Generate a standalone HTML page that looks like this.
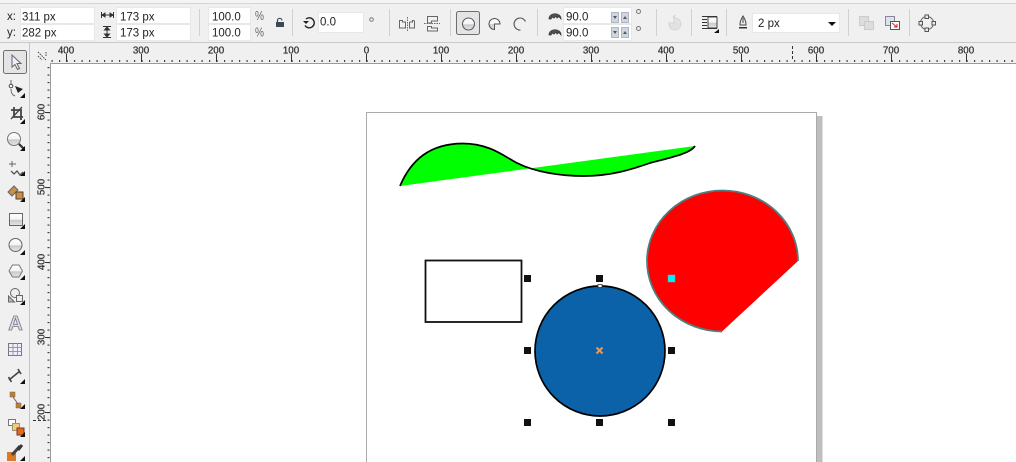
<!DOCTYPE html>
<html><head><meta charset="utf-8"><style>
html,body{margin:0;padding:0;background:#fff;width:1016px;height:462px;overflow:hidden}
svg{display:block}
text{font-family:"Liberation Sans",sans-serif}
.t{font-size:11.5px;fill:#222}
.r{font-size:9.8px;fill:#333;stroke:#333;stroke-width:.25;text-anchor:middle}
.i{fill:#fff;stroke:#e8e8e8}
.s{stroke:#d0d0d0;stroke-width:1}
.c{fill:none;stroke:#666;stroke-width:1}
.k{fill:#111}
</style></head><body>
<svg width="1016" height="462" viewBox="0 0 1016 462" xmlns="http://www.w3.org/2000/svg">
<defs>
<pattern id="hm" x="366.5" y="0" width="7.5" height="462" patternUnits="userSpaceOnUse"><rect x="0" y="60" width="1.2" height="2" fill="#444"/></pattern>
<pattern id="vm" x="0" y="112" width="60" height="7.5" patternUnits="userSpaceOnUse"><rect x="47.500" y="0" width="2" height="1.200" fill="#444"/></pattern>
<linearGradient id="g1" x1="0" y1="0" x2="0" y2="1"><stop offset="0" stop-color="#fff"/><stop offset=".5" stop-color="#f4f4f4"/><stop offset=".55" stop-color="#c8c8d0"/><stop offset="1" stop-color="#e6e6ea"/></linearGradient>
</defs>
<!-- backgrounds -->
<rect width="1016" height="462" fill="#fff"/>
<rect width="1016" height="63" fill="#f0f0f0"/>
<rect y="0" width="1016" height="3" fill="#f4f4f4"/>
<rect y="3" width="1016" height="1" fill="#d4d4d4"/>
<rect y="42" width="1016" height="1" fill="#c8c8c8"/>
<rect x="0" y="43" width="30" height="419" fill="#f0f0f0"/>
<rect x="29" y="43" width="1" height="419" fill="#c4c4c4"/>
<rect x="30" y="43" width="20" height="419" fill="#f0f0f0"/>
<rect x="50" y="63" width="966" height="1" fill="#9a9a9a"/>
<rect x="50" y="63" width="1" height="399" fill="#9a9a9a"/>
<!-- ruler ticks -->
<rect x="51" y="55" width="965" height="8" fill="url(#hm)"/>
<rect x="44" y="64" width="6" height="398" fill="url(#vm)"/>
<g fill="#333">
<rect x="66" y="54" width="1" height="8"/><rect x="141" y="54" width="1" height="8"/><rect x="216" y="54" width="1" height="8"/><rect x="291" y="54" width="1" height="8"/><rect x="366" y="54" width="1" height="8"/><rect x="441" y="54" width="1" height="8"/><rect x="516" y="54" width="1" height="8"/><rect x="591" y="54" width="1" height="8"/><rect x="666" y="54" width="1" height="8"/><rect x="741" y="54" width="1" height="8"/><rect x="816" y="54" width="1" height="8"/><rect x="891" y="54" width="1" height="8"/><rect x="966" y="54" width="1" height="8"/>
<rect x="792" y="46" width="1" height="3"/><rect x="792" y="51" width="1" height="3"/><rect x="792" y="56" width="1" height="3"/>
<rect x="45" y="112" width="5" height="1"/><rect x="45" y="187" width="5" height="1"/><rect x="45" y="262" width="5" height="1"/><rect x="45" y="337" width="5" height="1"/><rect x="45" y="412" width="5" height="1"/>
<rect x="33" y="420" width="3" height="1"/><rect x="38" y="420" width="3" height="1"/><rect x="43" y="420" width="3" height="1"/>
</g>
<g class="r">
<text class="r" x="66" y="53.5">400</text><text class="r" x="141" y="53.5">300</text><text class="r" x="216" y="53.5">200</text><text class="r" x="291" y="53.5">100</text><text class="r" x="366.5" y="53.5">0</text><text class="r" x="441" y="53.5">100</text><text class="r" x="516" y="53.5">200</text><text class="r" x="591" y="53.5">300</text><text class="r" x="666" y="53.5">400</text><text class="r" x="741" y="53.5">500</text><text class="r" x="816" y="53.5">600</text><text class="r" x="891" y="53.5">700</text><text class="r" x="966" y="53.5">800</text>
<text class="r" transform="translate(44.5,112) rotate(-90)">600</text><text class="r" transform="translate(44.5,187) rotate(-90)">500</text><text class="r" transform="translate(44.5,262) rotate(-90)">400</text><text class="r" transform="translate(44.5,337) rotate(-90)">300</text><text class="r" transform="translate(44.5,412) rotate(-90)">200</text>
</g>
<!-- ruler corner -->
<path d="M38,52 L46,60 M46,52 L46,56 M38,56 L42,60" fill="none" stroke="#444" stroke-width="1" stroke-dasharray="1.5 1"/>
<!-- top toolbar: position -->
<text class="t" x="7" y="20">x:</text><text class="t" x="7" y="36">y:</text>
<rect class="i" x="20.500" y="7.500" width="74" height="16"/><rect class="i" x="20.500" y="24.500" width="74" height="16"/>
<text class="t" x="22" y="20.500">311 px</text><text class="t" x="22" y="36.500">282 px</text>
<path d="M101.500,12v6M113.500,12v6M102,15h11M102,15l3,-2v4zM113,15l-3,-2v4z" fill="#333" stroke="#333" stroke-width="1"/>
<path d="M103,26.500h8M103,37.500h8M107,27v10M107,27l-2.500,3h5zM107,37l-2.500,-3h5z" fill="#333" stroke="#333" stroke-width="1"/>
<rect class="i" x="116.500" y="7.500" width="74" height="16"/><rect class="i" x="116.500" y="24.500" width="74" height="16"/>
<text class="t" x="120" y="20.500">173 px</text><text class="t" x="120" y="36.500">173 px</text>
<line class="s" x1="199.500" y1="9" x2="199.500" y2="36"/>
<rect class="i" x="208.500" y="7.500" width="42" height="16"/><rect class="i" x="208.500" y="24.500" width="42" height="16"/>
<text class="t" x="212" y="20.500">100.0</text><text class="t" x="212" y="36.500">100.0</text>
<text x="255" y="20" font-size="13" fill="#666" textLength="9" lengthAdjust="spacingAndGlyphs">%</text><text x="255" y="36.500" font-size="13" fill="#666" textLength="9" lengthAdjust="spacingAndGlyphs">%</text>
<rect x="276" y="22" width="8" height="5" fill="#3a4a55"/><path d="M277.500,22v-1.500a2.200,2.200 0 0 1 4.400,0" fill="none" stroke="#3a4a55" stroke-width="1.200"/>
<line class="s" x1="292.500" y1="9" x2="292.500" y2="36"/>
<!-- rotation -->
<path d="M306,19a5,5 0 1 1 -1,6.500" fill="none" stroke="#222" stroke-width="1.400"/><path d="M303,21h6l-3,3z" fill="#222"/>
<rect class="i" x="318.500" y="12.500" width="45" height="20"/>
<text class="t" x="320" y="25.500">0.0</text>
<circle cx="371.500" cy="19.500" r="1.800" fill="none" stroke="#777"/>
<line class="s" x1="389.500" y1="9" x2="389.500" y2="36"/>
<!-- mirror -->
<path d="M399.500,20.500v7.500h6v-6h-3v-1.500zM409.500,22h3v-1.500h1.500M414.500,20.500v7.500h-5v-6" class="c"/>
<path d="M407.500,17v14" stroke="#666" stroke-dasharray="1.500 1" fill="none"/>
<path d="M427.500,16.500h10v4.500h-6v2h-4zM427.500,26.500h4v1.500h6v3h-10z" class="c"/>
<path d="M424,23.500h16" stroke="#666" stroke-dasharray="1.500 1" fill="none"/>
<line class="s" x1="450.500" y1="9" x2="450.500" y2="36"/>
<!-- ellipse type -->
<rect x="456.500" y="11.500" width="23" height="23" rx="2" fill="#e4e4e4" stroke="#6e6e6e"/>
<circle cx="468.500" cy="24" r="6" fill="url(#g1)" stroke="#555"/>
<path d="M494.500,24h5.500a5.500,5.500 0 1 0 -5.500,5.500z" fill="url(#g1)" stroke="#555"/>
<path d="M520.500,30a6,6 0 1 1 5,-8.500" fill="none" stroke="#555" stroke-width="1.100"/>
<line class="s" x1="537.500" y1="9" x2="537.500" y2="36"/>
<!-- angles -->
<path d="M549,19c0,-7 12,-7 12,0l-2,-2.500l-2,1.500l-1,-2l-2,2l-2,-1l-1,2z" fill="#555" stroke="#333" stroke-width=".8"/>
<path d="M549,35c0,-7 12,-7 12,0l-2,-2.500l-2,1.500l-1,-2l-2,2l-2,-1l-1,2z" fill="#555" stroke="#333" stroke-width=".8"/>
<rect class="i" x="563.500" y="7.500" width="68" height="16"/><rect class="i" x="563.500" y="24.500" width="68" height="16"/>
<text class="t" x="566" y="20.500">90.0</text><text class="t" x="566" y="36.500">90.0</text>
<g fill="#d0d6e0" stroke="#b0b6c0"><rect x="611.500" y="12.500" width="7" height="10"/><rect x="621.500" y="12.500" width="7" height="10"/><rect x="611.500" y="27.500" width="7" height="10"/><rect x="621.500" y="27.500" width="7" height="10"/></g>
<path d="M613,16h4l-2,3zM623,19h4l-2,-3zM613,31h4l-2,3zM623,34h4l-2,-3z" fill="#556"/>
<circle cx="638.500" cy="11.500" r="2" fill="none" stroke="#777"/><circle cx="638.500" cy="28.500" r="2" fill="none" stroke="#777"/>
<line class="s" x1="656.500" y1="9" x2="656.500" y2="36"/>
<!-- disabled rotate pie -->
<path d="M674,23v-5a6,6 0 1 1 -5,5z" fill="#e2e2e2" stroke="#d4d4d4"/><path d="M673,18l2,-3" stroke="#d4d4d4" fill="none" stroke-width="1.500"/>
<line class="s" x1="691.500" y1="9" x2="691.500" y2="36"/>
<!-- text wrap -->
<rect x="708" y="17" width="9" height="11" fill="url(#g1)" stroke="#444"/>
<path d="M702,16.500h15M702,19.500h5M702,22.500h5M702,25.500h5M702,28.500h15" stroke="#333" stroke-width="1" fill="none"/>
<path d="M719,33h-5l5,-4z" fill="#111"/>
<line class="s" x1="726.500" y1="9" x2="726.500" y2="36"/>
<!-- pen -->
<path d="M743,16c-3,5 -3,7 -3,9h6c0,-2 0,-4 -3,-9zM743,18v5" fill="#eee" stroke="#444"/><rect x="739" y="27" width="8" height="1.500" fill="#333"/>
<rect x="752.500" y="13.500" width="87" height="19" class="i"/>
<text class="t" x="758" y="27">2 px</text>
<path d="M828,22h8l-4,4z" fill="#111"/>
<line class="s" x1="848.500" y1="9" x2="848.500" y2="36"/>
<!-- to front/back -->
<rect x="859.500" y="16.500" width="9" height="9" fill="#ddd" stroke="#ccc"/><rect x="864.500" y="21.500" width="9" height="8" fill="#ddd" stroke="#ccc"/>
<rect x="885.500" y="16.500" width="9" height="9" fill="#dde0ee" stroke="#889"/><rect x="890.500" y="21.500" width="9" height="8" fill="#fff" stroke="#555"/><path d="M892,23l5,4m0,-3v3h-3" stroke="#d22" fill="none"/>
<line class="s" x1="909.500" y1="9" x2="909.500" y2="36"/>
<circle cx="927" cy="23" r="6.500" fill="none" stroke="#666"/>
<g fill="#eee" stroke="#555"><rect x="925" y="15" width="3.500" height="3.500"/><rect x="925" y="28" width="3.500" height="3.500"/><rect x="919" y="21.500" width="3.500" height="3.500"/><rect x="932" y="21.500" width="3.500" height="3.500"/></g>
<!-- left toolbox -->
<rect x="3.500" y="50.500" width="23" height="23" rx="2" fill="#e4e4e4" stroke="#707070"/>
<path d="M12,55v12l3,-2.500l2.500,5l2,-1l-2.500,-5h4z" fill="#eef" stroke="#666"/>
<circle cx="11" cy="86" r="1.800" fill="#fff" stroke="#444"/><path d="M11,80v4M11,89c0,4 1,6 4,7" stroke="#666" fill="none"/><path d="M15,86l8,3l-5,4z" fill="#222"/><path d="M25,93v5h-5z" fill="#111"/>
<path d="M11,110h10v10M14,107v10h9" fill="none" stroke="#444" stroke-width="1.800"/><path d="M11,119l11,-12" stroke="#444" stroke-width="1.300"/><path d="M25,119v5h-5z" fill="#111"/>
<circle cx="14" cy="139" r="6.500" fill="url(#g1)" stroke="#777"/><path d="M19,144l5,5" stroke="#333" stroke-width="2.200"/><path d="M25,146v5h-5z" fill="#111"/>
<path d="M9,164h7M12,161v6" stroke="#666"/><path d="M11,171l3,3l3,-3l3,4l3,-3" fill="none" stroke="#555" stroke-width="1.300"/><path d="M25,171v5h-5z" fill="#111"/>
<path d="M8,192l6,-6l4,4l-6,6z" fill="#c8904a" stroke="#666"/><rect x="16" y="192" width="7" height="7" fill="#d88c38" stroke="#444"/><path d="M25,197v5h-5z" fill="#111"/>
<rect x="9.500" y="213.500" width="13" height="12" fill="url(#g1)" stroke="#666"/><path d="M25,224v5h-5z" fill="#111"/>
<circle cx="15.500" cy="245" r="6.500" fill="url(#g1)" stroke="#666"/><path d="M25,250v5h-5z" fill="#111"/>
<path d="M9,271l3.500,-6h6.500l3.500,6l-3.500,6h-6.500z" fill="url(#g1)" stroke="#777"/><path d="M25,275v5h-5z" fill="#111"/>
<circle cx="15" cy="293" r="4.500" fill="#eee" stroke="#666"/><rect x="16.500" y="295.500" width="6" height="6" fill="#eee" stroke="#666"/><path d="M8.500,296l6,6h-6z" fill="#bbb" stroke="#666"/><path d="M25,300v5h-5z" fill="#111"/>
<text x="15.500" y="330" text-anchor="middle" font-size="20" font-weight="bold" fill="#d8dce8" stroke="#778" stroke-width=".8">A</text>
<rect x="8.500" y="343.500" width="13" height="12" fill="#eef" stroke="#777"/><path d="M8.500,347.500h13M8.500,351.500h13M13,343.500v12M17.500,343.500v12" stroke="#999" fill="none"/>
<path d="M9,380l11,-9M8.500,377l3,5M18,369l3,5" stroke="#444" stroke-width="1.600" fill="none"/><path d="M25,379v5h-5z" fill="#111"/>
<rect x="10" y="392" width="5" height="5" fill="#c87a28" stroke="#666" stroke-width=".5"/><rect x="16" y="403" width="5" height="5" fill="#c87a28" stroke="#666" stroke-width=".5"/><path d="M13,397l5,7" stroke="#666"/><path d="M25,404v5h-5z" fill="#111"/>
<rect x="8.500" y="419.500" width="7" height="6" fill="#fff" stroke="#777"/><rect x="12.500" y="423.500" width="7" height="7" fill="#f2ca78" stroke="#997"/><rect x="17" y="428" width="7" height="7" fill="#e86a10" stroke="#733"/><path d="M25,432v5h-5z" fill="#111"/>
<rect x="7" y="452" width="9" height="9" fill="#d87a28"/><path d="M12,455l8,-9" stroke="#444" stroke-width="3"/><path d="M18,450l4,-5" stroke="#333" stroke-width="3"/><path d="M25,456v5h-5z" fill="#111"/>
<!-- page -->
<rect x="817" y="116" width="5.500" height="346" fill="#bfbfbf"/>
<path d="M366.500,462V112.500H816.500V462" fill="#fff" stroke="#aaa"/>
<!-- green -->
<path d="M400,186C411,160 430,143.500 463,143.500C490,143.500 505,157 517,163C535,172 560,176 584,176C610,176 630,170 650,163C668,158 690,154 695,146Z" fill="#00ff00"/>
<path d="M400,186C411,160 430,143.500 463,143.500C490,143.500 505,157 517,163C535,172 560,176 584,176C610,176 630,170 650,163C668,158 690,154 695,146" fill="none" stroke="#000" stroke-width="1.700"/>
<!-- red -->
<path d="M798,261A75.500,70.500 0 1 0 722,331.500Z" fill="#ff0000"/>
<path d="M798,261A75.500,70.500 0 1 0 722,331.500" fill="none" stroke="#4e7f80" stroke-width="1.800"/>
<rect x="668" y="275" width="7" height="7" fill="#00f0ff" stroke="#6aa" stroke-width=".5"/>
<!-- rect -->
<rect x="425.500" y="260.500" width="96" height="61.500" fill="#fff" stroke="#111" stroke-width="1.800"/>
<!-- blue -->
<circle cx="600" cy="351" r="65" fill="#0b62a8" stroke="#000" stroke-width="1.700"/>
<path d="M596.500,347.500l6,6M602.500,347.500l-6,6" stroke="#dc9c68" stroke-width="2"/>
<rect x="598" y="284.500" width="4" height="3" fill="#fff" stroke="#333" stroke-width=".8"/>
<g class="k"><rect x="524" y="275" width="7" height="7"/><rect x="596" y="275" width="7" height="7"/><rect x="524" y="347" width="7" height="7"/><rect x="668" y="347" width="7" height="7"/><rect x="524" y="419" width="7" height="7"/><rect x="596" y="419" width="7" height="7"/><rect x="668" y="419" width="7" height="7"/></g>
</svg>
</body></html>
